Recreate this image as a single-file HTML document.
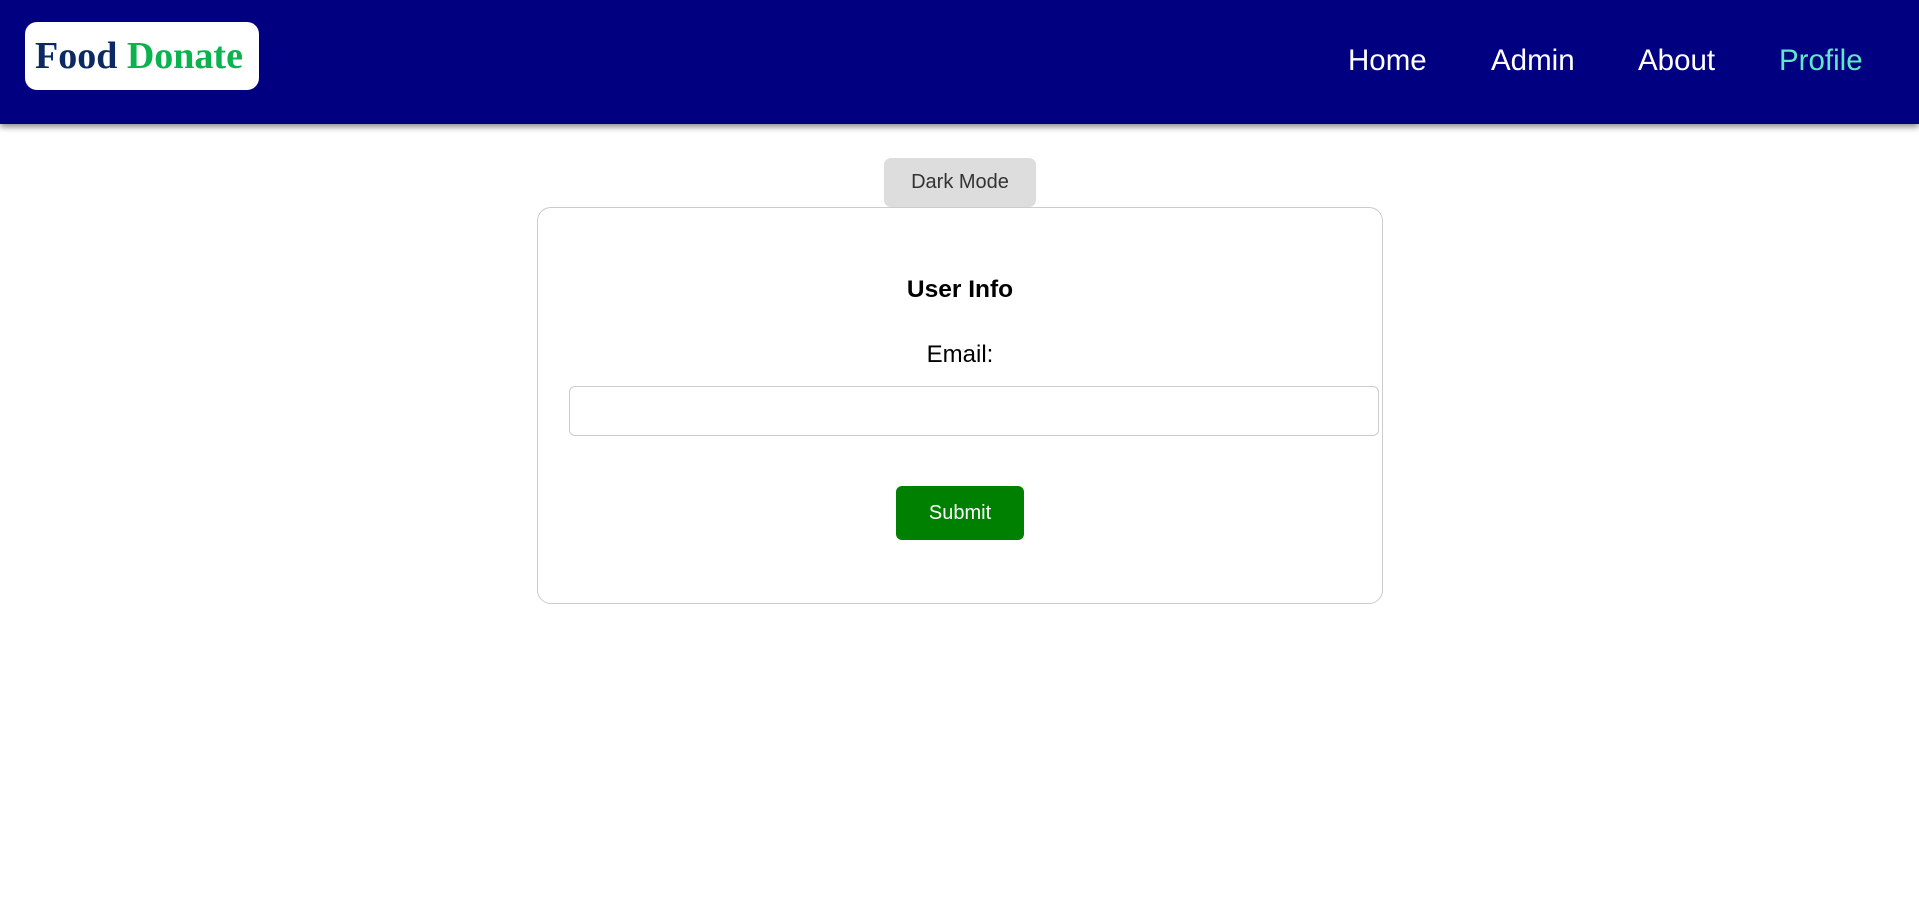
<!DOCTYPE html>
<html><head><meta charset="utf-8"><style>
*{box-sizing:border-box;margin:0;padding:0}
body{width:1919px;height:904px;background:#fff;font-family:"Liberation Sans",Arial,sans-serif;position:relative;overflow:hidden}
.nav{position:absolute;left:0;top:0;width:1919px;height:124px;background:#000080;box-shadow:0 3px 6px rgba(0,0,0,.45)}
.logo{position:absolute;left:25px;top:22px;width:234px;height:68px;background:#fff;border-radius:12px;font-family:"Liberation Serif",serif;font-weight:bold;font-size:38px;line-height:68px;padding-left:10px;white-space:nowrap}
.logo .a{color:#0b2a63}.logo .b{color:#0bb34f}
.nav a{position:absolute;top:42px;font-size:29.5px;line-height:38px;color:#fff;text-decoration:none}
.dm{position:absolute;left:884px;top:158px;width:152px;height:49px;background:#ddd;border-radius:7px;color:#333;font-size:20px;text-align:center;line-height:49px}
.card{position:absolute;left:537px;top:207px;width:846px;height:397px;border:1px solid #ccc;border-radius:14px}
.inp{position:absolute;left:569px;top:386px;width:810px;height:50px;border:1px solid #ccc;border-radius:6px}
.sub{position:absolute;left:896px;top:486px;width:128px;height:54px;background:#008000;border-radius:6px;color:#fff;font-size:20px;text-align:center;line-height:54px}
</style></head><body>
<div class="nav">
<div class="logo"><span class="a">Food</span> <span class="b">Donate</span></div>
<a style="left:1348px">Home</a>
<a style="left:1491px">Admin</a>
<a style="left:1638px">About</a>
<a style="left:1779px;color:#5fe8c8">Profile</a>
</div>
<div class="dm">Dark Mode</div>
<div class="card"></div>
<div style="position:absolute;left:537px;width:846px;top:276px;text-align:center;font-weight:bold;font-size:24.5px;color:#000">User Info</div>
<div style="position:absolute;left:537px;width:846px;top:341px;text-align:center;font-size:24px;color:#000">Email:</div>
<div class="inp"></div>
<div class="sub">Submit</div>
</body></html>
